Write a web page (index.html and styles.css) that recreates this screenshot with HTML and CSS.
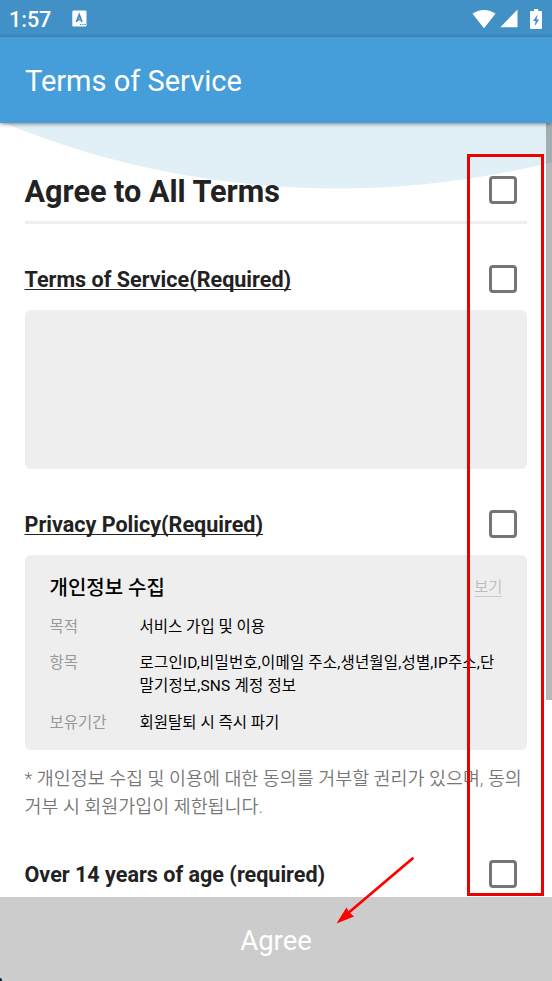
FILE: index.html
```html
<!DOCTYPE html>
<html lang="ko">
<head>
    <meta charset="UTF-8">
    <meta name="viewport" content="width=device-width, initial-scale=1.0">
    <title>Terms of Service</title>
    <link rel="stylesheet" href="styles.css">
</head>
<body>

    <div class="status-bar">
        <span class="clock">1:57</span>
        <svg class="status-app" width="15" height="17" viewBox="0 0 15 17">
            <rect x="0.3" y="0.5" width="14.2" height="16" rx="1.2" fill="#fff"/>
            <path d="M4.4 12 7.2 4.8 10 12M5.4 9.6h3.6" fill="none" stroke="#4190c6" stroke-width="1.8"/>
            <path d="M8 14.5h1.3M10.3 14.5h1.3M12.5 14.5h1.2" stroke="#4190c6" stroke-width="1.2"/>
        </svg>
        <div class="status-icons">
            <svg width="24" height="20" viewBox="0 0 24 20">
                <path d="M0.5 4.8Q5.500 1 12 1T23.500 4.800L12 19.300Z" fill="#fff"/>
            </svg>
            <svg width="18" height="19" viewBox="0 0 18 19">
                <path d="M17.500 0.500V18.300H0.300Z" fill="#fff"/>
            </svg>
            <svg width="12" height="20" viewBox="0 0 12 20">
                <path d="M4 0h4.200v2H11Q12 2 12 3V19Q12 20 11 20H1Q0 20 0 19V3Q0 2 1 2H4Z" fill="#fff"/>
                <path d="M7.600 5.500 3 12h2.600L4.600 17.300 9.200 10.400H6.600Z" fill="#4190c6"/>
            </svg>
        </div>
    </div>

    <header class="app-bar">
        <h1>Terms of Service</h1>
    </header>

    <main>
        <svg class="wave" width="552" height="70" viewBox="0 123 552 70">
            <circle cx="338" cy="-696.500" r="885" fill="#e1f0f7"/>
        </svg>
        <div class="scrollbar"></div>

        <div class="row row-all">
            <h2>Agree to All Terms</h2>
            <span class="checkbox"></span>
        </div>

        <div class="row row-terms">
            <h3><a class="link">Terms of Service(Required)</a></h3>
            <span class="checkbox"></span>
        </div>
        <div class="panel panel-empty"></div>

        <div class="row row-privacy">
            <h3><a class="link">Privacy Policy(Required)</a></h3>
            <span class="checkbox"></span>
        </div>
        <div class="panel panel-privacy">
            <div class="panel-head">
                <h4>개인정보 수집</h4>
                <a class="view">보기</a>
            </div>
            <dl>
                <dt>목적</dt>
                <dd>서비스 가입 및 이용</dd>
                <dt>항목</dt>
                <dd class="items">로그인ID,비밀번호,이메일 주소,생년월일,성별,IP주소,단<br>말기정보,SNS 계정 정보</dd>
                <dt>보유기간</dt>
                <dd>회원탈퇴 시 즉시 파기</dd>
            </dl>
        </div>
        <p class="note">* 개인정보 수집 및 이용에 대한 동의를 거부할 권리가 있으며, 동의<br>거부 시 회원가입이 제한됩니다.</p>

        <div class="row row-age">
            <h3>Over 14 years of age (required)</h3>
            <span class="checkbox"></span>
        </div>
    </main>

    <footer>
        <button class="agree">Agree</button>
    </footer>

    <!-- callouts -->
    <div class="callout-box"></div>
    <svg class="callout-arrow" width="82" height="70" viewBox="334 856 82 70">
        <path d="M412.500 858.500 350 911.500" stroke="#f00" stroke-width="2.800" stroke-linecap="round"/>
        <path d="M336.500 923.500 346.500 907.500 349 912 354 916.500Z" fill="#f00"/>
    </svg>
    <div class="corner"></div>

</body>
</html>
```
FILE: styles.css
```css
* {
    padding: 0;
    margin: 0;
    box-sizing: border-box;
}

body {
    position: relative;
    display: flex;
    flex-direction: column;
    width: 552px;
    height: 981px;
    overflow: hidden;
    background-color: #fff;
    font-family: Roboto, "Noto Sans CJK KR", sans-serif;
    color: #222;
}

.status-bar {
    display: flex;
    align-items: center;
    height: 37px;
    padding: 0 10px 0 9px;
    background-color: #4190c6;
    color: #fff;
}

.clock {
    width: 63px;
    font-size: 21.5px;
    font-weight: 500;
    line-height: 37px;
    padding-top: 1px;
}

.status-icons {
    display: flex;
    align-items: center;
    margin-left: auto;
}

.status-icons svg:nth-child(2) {
    margin: 0 12px 0 4px;
}

.app-bar {
    position: relative;
    z-index: 2;
    display: flex;
    align-items: center;
    height: 86px;
    padding: 2px 25px 0;
    background-color: #459ed9;
    box-shadow: 0 1px 4px rgba(0, 0, 0, 0.45);
}

.app-bar h1 {
    font-size: 29px;
    font-weight: 400;
    color: #fff;
}

main {
    position: relative;
    flex: 1;
    overflow: hidden;
    padding: 34px 24.6px 0 24.5px;
}

.wave {
    position: absolute;
    top: 0;
    left: 0;
}

.scrollbar {
    position: absolute;
    top: 0;
    right: 0;
    width: 6px;
    height: 577px;
    background-color: rgba(0, 0, 0, 0.28);
}

.row {
    position: relative;
    display: flex;
    justify-content: space-between;
    align-items: center;
    height: 62px;
    padding-right: 10.4px;
}

.row-all {
    height: 67px;
    border-bottom: 3px solid #eee;
    padding-top: 2px;
}

.row-terms {
    margin-top: 24px;
}

.row-privacy {
    margin-top: 24px;
}

.row-age {
    margin-top: 22px;
}

.checkbox {
    width: 28px;
    height: 28px;
    border: 3px solid #757575;
    border-radius: 4px;
}

h2 {
    font-size: 30.6px;
    font-weight: 700;
    padding-top: 2px;
}

h3 {
    font-size: 21.55px;
    font-weight: 700;
    padding-top: 1px;
}

.link {
    text-decoration: underline;
    text-decoration-thickness: 1px;
    text-underline-offset: 2px;
    text-decoration-skip-ink: none;
}

.panel {
    border-radius: 6px;
    background-color: #eee;
}

.panel-empty {
    height: 159px;
}

.panel-privacy {
    height: 195px;
    padding: 17px 25px 0 25px;
}

.panel-head {
    display: flex;
    justify-content: space-between;
    align-items: center;
    height: 28px;
    margin-bottom: 16px;
}

h4 {
    font-size: 20px;
    font-weight: 500;
    color: #000;
}

.view {
    font-size: 15.3px;
    font-weight: 350;
    color: #bbb;
    border-bottom: 1px solid #ccc;
    line-height: 17px;
    padding-top: 3px;
}

dl {
    display: grid;
    grid-template-columns: 90px 1fr;
    row-gap: 13.4px;
    font-size: 15.5px;
    line-height: 23px;
    white-space: nowrap;
}

dt {
    color: #999;
}

dd {
    color: #000;
}

.items {
    letter-spacing: 0.18px;
}

.note {
    margin-top: 16px;
    font-size: 18.45px;
    line-height: 27.5px;
    font-weight: 350;
    color: #777;
    white-space: nowrap;
}

footer {
    display: flex;
    height: 84px;
    background-color: #ccc;
}

.agree {
    flex: 1;
    border: none;
    background: none;
    font-family: inherit;
    font-size: 27.5px;
    color: #fff;
    padding-top: 3px;
}

.callout-box {
    position: absolute;
    z-index: 3;
    left: 467px;
    top: 154px;
    width: 77px;
    height: 742px;
    border: 3px solid #ec0000;
}

.callout-arrow {
    position: absolute;
    z-index: 3;
    left: 334px;
    top: 856px;
}

.corner {
    position: absolute;
    left: 0;
    bottom: 0;
    width: 2px;
    height: 3px;
    border-top-right-radius: 2px;
    background-color: #123;
}
```
